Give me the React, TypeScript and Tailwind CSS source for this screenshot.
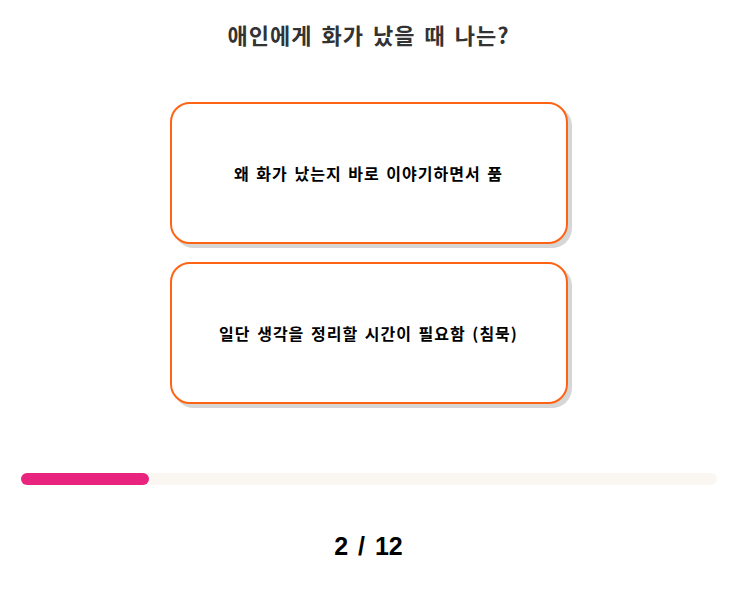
const App = () => {
  const answers = ["왜 화가 났는지 바로 이야기하면서 품", "일단 생각을 정리할 시간이 필요함 (침묵)"]

  return (
    <div className="w-[737px] h-[590px] bg-white flex flex-col items-center font-['Noto_Sans_CJK_KR',sans-serif]">
      <h1 className="mt-[18px] h-[32px] leading-[32px] text-[22px] font-bold text-[#333333] tracking-[1px] [word-spacing:3px]">
        애인에게 화가 났을 때 나는?
      </h1>

      <div className="mt-[52px] flex flex-col gap-[18px]">
        {answers.map((text, i) => (
          <button
            key={i}
            className="w-[398px] h-[142px] rounded-[20px] border-2 border-[#ff6314] bg-white shadow-[4px_4px_0_#d6d6d6] flex items-center justify-center text-[16px] font-bold text-black tracking-[1px] [word-spacing:2px]"
          >
            {text}
          </button>
        ))}
      </div>

      {/* progress */}
      <div className="mt-[69px] w-[696px] h-[12px] rounded-full bg-[#faf6f2]">
        <div className="h-full w-[128px] rounded-full bg-[#e8247f]"></div>
      </div>

      <div className="mt-[43px] text-[25px] font-bold text-black font-['Liberation_Sans',sans-serif] [word-spacing:3px]">
        2 / 12
      </div>
    </div>
  )
}

export default App
